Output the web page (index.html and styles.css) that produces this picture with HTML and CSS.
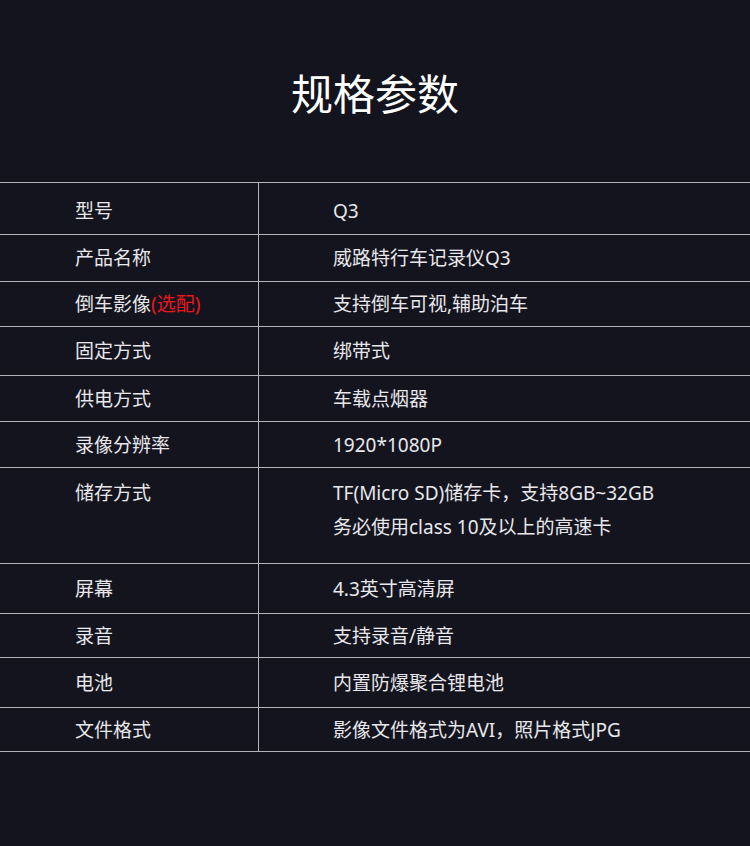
FILE: index.html
```html
<!DOCTYPE html>
<html lang="zh-CN">
<head>
<meta charset="utf-8">
<title>规格参数</title>
<link rel="stylesheet" href="styles.css">
</head>
<body>
<div class="page">
  <h1 class="title">规格参数</h1>
  <div class="spec">
    <div class="row r1"><div class="k">型号</div><div class="v">Q3</div></div>
    <div class="row r2"><div class="k">产品名称</div><div class="v">威路特行车记录仪Q3</div></div>
    <div class="row r3"><div class="k">倒车影像<span class="opt">(选配)</span></div><div class="v">支持倒车可视,辅助泊车</div></div>
    <div class="row r4"><div class="k">固定方式</div><div class="v">绑带式</div></div>
    <div class="row r5"><div class="k">供电方式</div><div class="v">车载点烟器</div></div>
    <div class="row r6"><div class="k">录像分辨率</div><div class="v">1920*1080P</div></div>
    <div class="row r7 multi"><div class="k">储存方式</div><div class="v">TF(Micro SD)储存卡，支持8GB~32GB<br>务必使用class 10及以上的高速卡</div></div>
    <div class="row r8"><div class="k">屏幕</div><div class="v">4.3英寸高清屏</div></div>
    <div class="row r9"><div class="k">录音</div><div class="v">支持录音/静音</div></div>
    <div class="row r10"><div class="k">电池</div><div class="v">内置防爆聚合锂电池</div></div>
    <div class="row r11 last"><div class="k">文件格式</div><div class="v">影像文件格式为AVI，照片格式JPG</div></div>
  </div>
</div>
</body>
</html>
```

FILE: styles.css
```css
html, body {
  margin: 0;
  padding: 0;
  background: #14141e;
}
body {
  font-family: "Noto Sans", "Noto Sans CJK SC", sans-serif;
  color: #e8e8ec;
}
.page {
  width: 750px;
  height: 846px;
  background: #14141e;
}
.title {
  margin: 0;
  height: 182px;
  box-sizing: border-box;
  padding-top: 64px;
  text-align: center;
  font-size: 42px;
  font-weight: 400;
  line-height: 56px;
  color: #ffffff;
  font-family: "Noto Sans CJK SC", sans-serif;
}
.spec {
  width: 750px;
}
.row {
  display: grid;
  grid-template-columns: 259px 1fr;
  border-top: 1px solid #b3b3ba;
  box-sizing: border-box;
  font-size: 19px;
  line-height: 26px;
}
.row.last {
  border-bottom: 1px solid #b3b3ba;
}
.k, .v {
  display: flex;
  align-items: center;
}
.k {
  padding-left: 75px;
  border-right: 1px solid #b3b3ba;
}
.v {
  padding-left: 74px;
}
.opt {
  color: #f0141c;
}
.r1 { height: 52px; padding-top: 5px; }
.r1 .k { margin-top: -5px; padding-top: 5px; }
.r2 { height: 47px; }
.r3 { height: 45px; }
.r4 { height: 49px; }
.r5 { height: 46px; }
.r6 { height: 46px; }
.r7 { height: 96px; }
.r8 { height: 50px; }
.r9 { height: 44px; }
.r10 { height: 50px; }
.r11 { height: 45px; }
.multi .k, .multi .v {
  align-items: flex-start;
  padding-top: 8px;
  line-height: 34px;
}
.multi .v { display: block; }
```
